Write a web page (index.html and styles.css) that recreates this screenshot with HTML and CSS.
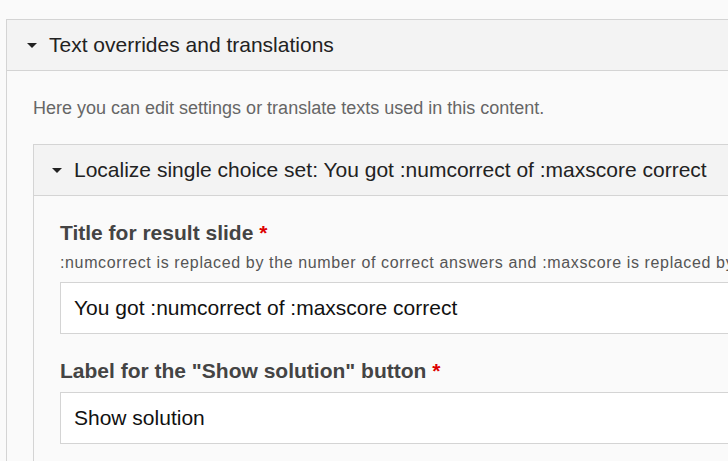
FILE: index.html
```html
<!DOCTYPE html>
<html lang="en">
<head>
  <meta charset="UTF-8">
  <meta name="viewport" content="width=device-width, initial-scale=1.0">
  <title>Text overrides and translations</title>
  <link rel="stylesheet" href="styles.css">
</head>
<body>
  <div class="group">
    <div class="group-title">
      <span class="caret"></span>
      <span>Text overrides and translations</span>
    </div>
    <div class="group-body">
      <p class="group-desc">Here you can edit settings or translate texts used in this content.</p>

      <div class="group inner">
        <div class="group-title">
          <span class="caret"></span>
          <span>Localize single choice set: You got :numcorrect of :maxscore correct</span>
        </div>
        <div class="group-body">
          <div class="field">
            <label class="field-label">Title for result slide <span class="req">*</span></label>
            <div class="field-desc">:numcorrect is replaced by the number of correct answers and :maxscore is replaced by the maximum score</div>
            <input class="text-input" type="text" value="You got :numcorrect of :maxscore correct">
          </div>
          <div class="field">
            <label class="field-label">Label for the "Show solution" button <span class="req">*</span></label>
            <input class="text-input" type="text" value="Show solution">
          </div>
        </div>
      </div>
    </div>
  </div>
</body>
</html>
```

FILE: styles.css
```css
body {
  margin: 0;
  padding: 19px 0 0 6px;
  background: #fafafa;
  font-family: "Liberation Sans", Arial, sans-serif;
  overflow: hidden;
  height: 100vh;
  box-sizing: border-box;
}

.group {
  width: 820px;
  border: 1px solid #d4d4d4;
  border-right: none;
  background: #fafafa;
}

.group-title {
  display: flex;
  align-items: center;
  height: 50px;
  padding-left: 20px;
  background: #f3f3f3;
  border-bottom: 1px solid #d4d4d4;
  font-size: 21px;
  color: #222;
  white-space: nowrap;
}

.caret {
  width: 0;
  height: 0;
  border-left: 5px solid transparent;
  border-right: 5px solid transparent;
  border-top: 5px solid #222;
  margin-right: 12px;
}

.group-body {
  padding: 27px 0 0 26px;
}

.group-desc {
  margin: 0 0 25px;
  font-size: 18px;
  line-height: 21px;
  color: #666;
  white-space: nowrap;
}

.inner {
  width: 760px;
}

.inner .group-title {
  padding-left: 18px;
}

.inner .group-body {
  padding-top: 26px;
  padding-bottom: 20px;
}

.field {
  margin-bottom: 26px;
}

.field-label {
  display: block;
  font-size: 21px;
  line-height: 22px;
  font-weight: bold;
  color: #444;
  margin-bottom: 10px;
}

.req {
  color: #d00;
}

.field-desc {
  font-size: 16px;
  line-height: 18px;
  letter-spacing: 0.63px;
  color: #555;
  white-space: nowrap;
  margin-bottom: 10px;
}

.text-input {
  display: block;
  box-sizing: border-box;
  width: 740px;
  height: 52px;
  padding: 0 13px;
  border: 1px solid #d4d4d4;
  background: #fff;
  font-family: "Liberation Sans", Arial, sans-serif;
  font-size: 21px;
  color: #111;
}
```
